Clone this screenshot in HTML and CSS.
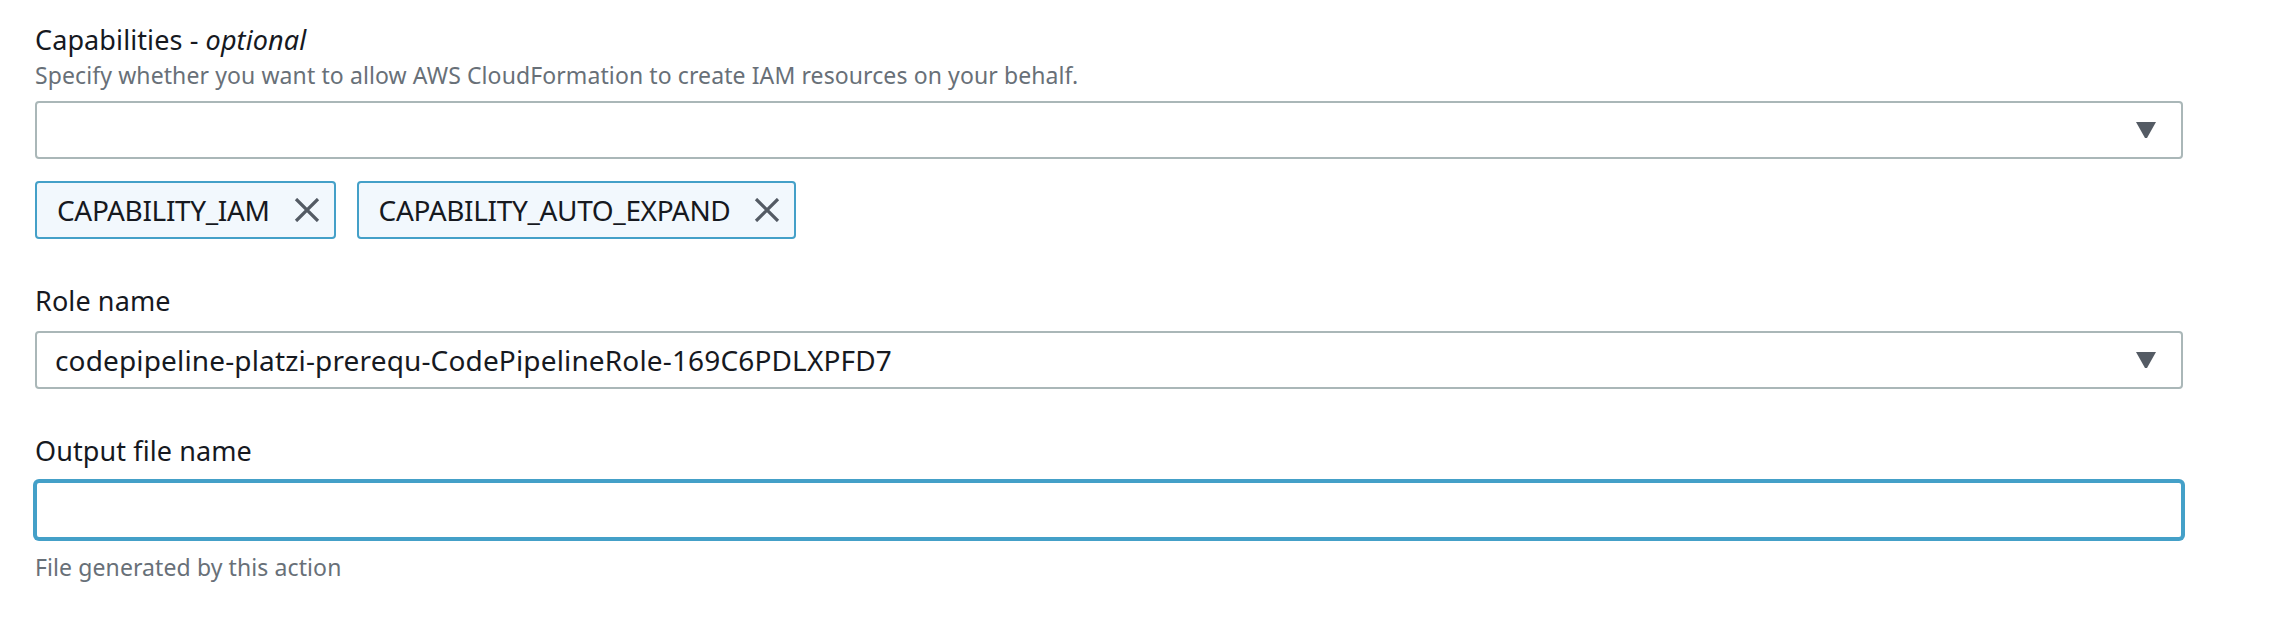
FILE: index.html
```html
<!DOCTYPE html>
<html>
<head>
<meta charset="utf-8">
<link rel="stylesheet" href="styles.css">
</head>
<body>
<div class="form">
  <div class="field">
    <div class="label">Capabilities - <i>optional</i></div>
    <div class="desc">Specify whether you want to allow AWS CloudFormation to create IAM resources on your behalf.</div>
    <div class="control select">
      <span class="value"></span>
      <svg class="caret" width="20" height="16" viewBox="0 0 20 16"><path d="M0 0 H20 L11 16 H9 Z" fill="#545b64"/></svg>
    </div>
    <div class="tokens">
      <div class="token"><span>CAPABILITY_IAM</span><svg class="x" width="26" height="24" viewBox="0 0 26 24"><path d="M2 1 L24 23 M24 1 L2 23" stroke="#545b64" stroke-width="3.2" fill="none"/></svg></div>
      <div class="token"><span>CAPABILITY_AUTO_EXPAND</span><svg class="x" width="26" height="24" viewBox="0 0 26 24"><path d="M2 1 L24 23 M24 1 L2 23" stroke="#545b64" stroke-width="3.2" fill="none"/></svg></div>
    </div>
  </div>
  <div class="field">
    <div class="label">Role name</div>
    <div class="control select">
      <span class="value">codepipeline-platzi-prerequ-CodePipelineRole-169C6PDLXPFD7</span>
      <svg class="caret" width="20" height="16" viewBox="0 0 20 16"><path d="M0 0 H20 L11 16 H9 Z" fill="#545b64"/></svg>
    </div>
  </div>
  <div class="field">
    <div class="label">Output file name</div>
    <div class="control input focused"></div>
    <div class="hint">File generated by this action</div>
  </div>
</div>
</body>
</html>
```
FILE: styles.css
```css
html, body {
  margin: 0;
  padding: 0;
  background: #ffffff;
}
body {
  font-family: "Noto Sans", "Open Sans", Arial, sans-serif;
  color: #16191f;
}
.form {
  padding: 20px 0 0 35px;
  width: 2148px;
}
.field {
  margin-bottom: 42px;
}
.label {
  font-size: 27px;
  line-height: 40px;
  height: 40px;
  margin-bottom: 10px;
  letter-spacing: 0.1px;
}
.field:first-child .label {
  margin-bottom: 0;
}
.desc {
  font-size: 23px;
  line-height: 30px;
  color: #687078;
  margin-bottom: 11px;
  letter-spacing: 0.1px;
}
.control {
  box-sizing: border-box;
  height: 58px;
  border: 2px solid #aab7b8;
  border-radius: 4px;
  background: #ffffff;
  display: flex;
  align-items: center;
  padding: 0 25px 0 18px;
}
.value {
  flex: 1;
  font-size: 28px;
  letter-spacing: 0.15px;
}
.caret {
  display: block;
  flex: none;
}
.input.focused {
  border-color: #44a0c8;
  box-shadow: 0 0 0 2px #44a0c8;
}
.tokens {
  display: flex;
  gap: 21px;
  margin-top: 22px;
}
.token {
  box-sizing: border-box;
  height: 58px;
  display: flex;
  align-items: center;
  gap: 24px;
  padding: 0 14px 0 20px;
  border: 2px solid #44a0c8;
  border-radius: 4px;
  background: #f2f8fd;
  font-size: 28px;
  letter-spacing: -0.35px;
}
.x {
  display: block;
}
.hint {
  font-size: 23px;
  line-height: 28px;
  color: #687078;
  margin-top: 14px;
  letter-spacing: 0.1px;
}
```
